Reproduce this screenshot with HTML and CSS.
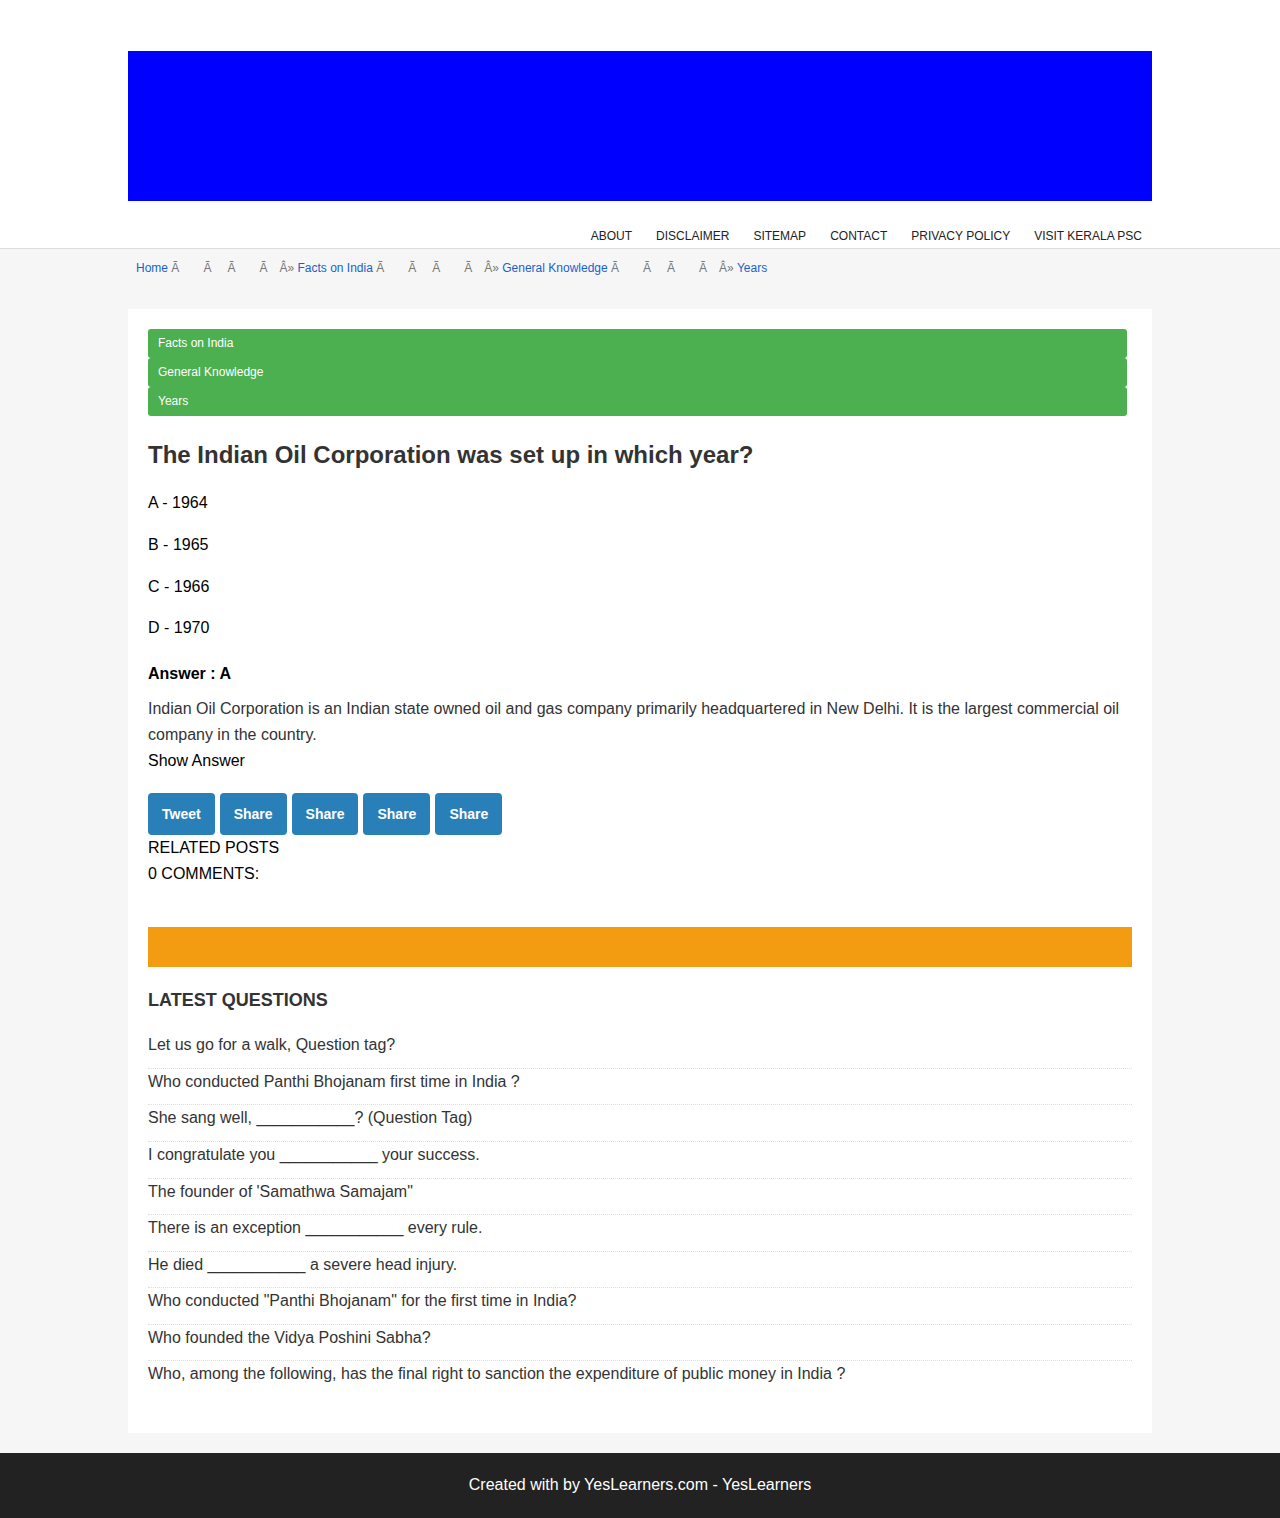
FILE: index.html
```html
<!DOCTYPE html>
<html>
<head>
<meta charset="utf-8">
<title>The Indian Oil Corporation was set up in which year?</title>
<link rel="stylesheet" href="styles.css">
</head>
<body>
<header class="header">
  <div class="banner"></div>
  <nav class="nav">
    <a href="#">ABOUT</a>
    <a href="#">DISCLAIMER</a>
    <a href="#">SITEMAP</a>
    <a href="#">CONTACT</a>
    <a href="#">PRIVACY POLICY</a>
    <a href="#">VISIT KERALA PSC</a>
  </nav>
</header>
<div class="crumbs">
  <a href="#">Home</a> <span class="moj">Ã<span class="g24"></span>Ã<span class="g16"></span>Ã<span class="g24"></span>Ã<span class="g12"></span>Â»</span> <a href="#">Facts on India</a> <span class="moj">Ã<span class="g24"></span>Ã<span class="g16"></span>Ã<span class="g24"></span>Ã<span class="g12"></span>Â»</span> <a href="#">General Knowledge</a> <span class="moj">Ã<span class="g24"></span>Ã<span class="g16"></span>Ã<span class="g24"></span>Ã<span class="g12"></span>Â»</span> <a href="#">Years</a>
</div>
<main class="card">
  <div class="tags">
    <a class="tag" href="#">Facts on India</a>
    <a class="tag" href="#">General Knowledge</a>
    <a class="tag" href="#">Years</a>
  </div>
  <h1 class="title">The Indian Oil Corporation was set up in which year?</h1>
  <p class="opt">A - 1964</p>
  <p class="opt">B - 1965</p>
  <p class="opt">C - 1966</p>
  <p class="opt">D - 1970</p>
  <div class="answer">Answer : A</div>
  <p class="desc">Indian Oil Corporation is an Indian state owned oil and gas company primarily headquartered in New Delhi. It is the largest commercial oil company in the country.</p>
  <div class="show">Show Answer</div>
  <div class="shares">
    <a class="btn" href="#">Tweet</a>
    <a class="btn" href="#">Share</a>
    <a class="btn" href="#">Share</a>
    <a class="btn" href="#">Share</a>
    <a class="btn" href="#">Share</a>
  </div>
  <div class="plain">RELATED POSTS</div>
  <div class="plain">0 COMMENTS:</div>
  <div class="orange"></div>
  <h3 class="latest">LATEST QUESTIONS</h3>
  <ul class="qlist">
    <li>Let us go for a walk, Question tag?</li>
    <li>Who conducted Panthi Bhojanam first time in India ?</li>
    <li>She sang well, ___________? (Question Tag)</li>
    <li>I congratulate you ___________ your success.</li>
    <li>The founder of 'Samathwa Samajam"</li>
    <li>There is an exception ___________ every rule.</li>
    <li>He died ___________ a severe head injury.</li>
    <li>Who conducted "Panthi Bhojanam" for the first time in India?</li>
    <li>Who founded the Vidya Poshini Sabha?</li>
    <li>Who, among the following, has the final right to sanction the expenditure of public money in India ?</li>
  </ul>
</main>
<footer class="footer">Created with by YesLearners.com - YesLearners</footer>
</body>
</html>
```
FILE: styles.css
```css
* { box-sizing: border-box; }
body {
  margin: 0;
  background: #f6f6f6;
  font-family: "Liberation Sans", Arial, sans-serif;
  line-height: 1.6;
  color: #000;
}
a { text-decoration: none; }

.header {
  background: #fff;
  padding-top: 51px;
  border-bottom: 1px solid #ddd;
}
.banner {
  width: 1024px;
  height: 150px;
  margin: 0 auto;
  background: #0000ff;
}
.nav {
  width: 1024px;
  margin: 0 auto;
  padding-top: 23px;
  display: flex;
  justify-content: flex-end;
  font-size: 12px;
  line-height: 24px;
}
.nav a {
  color: #222;
  padding: 0 12px;
}
.nav a:last-child { padding-right: 10px; }

.crumbs {
  width: 1024px;
  margin: 0 auto;
  padding: 9px 8px 7px;
  font-size: 12px;
  line-height: 20px;
  color: #777;
}
.crumbs a { color: #1a5fd0; }
.moj { color: #777; }
.g24 { display: inline-block; width: 24px; }
.g16 { display: inline-block; width: 16px; }
.g12 { display: inline-block; width: 12px; }

.card {
  width: 1024px;
  margin: 24px auto 20px;
  background: #fff;
  padding: 20px 20px 20px;
}
.tags { display: flex; flex-direction: column; }
.tag {
  display: block;
  height: 29px;
  line-height: 28px;
  margin-right: 5px;
  padding-left: 10px;
  background: #4caf50;
  color: #fff;
  font-size: 12px;
  border-radius: 3px;
}
.title {
  margin: 20px 0 16px;
  font-size: 24px;
  font-weight: bold;
  color: #333;
}
.opt {
  margin: 16px 0;
  font-size: 16px;
}
.answer {
  margin: 20px 0 10px;
  font-size: 16px;
  font-weight: bold;
}
.desc {
  margin: 0;
  font-size: 16px;
  color: #333;
}
.show { font-size: 16px; }
.shares {
  display: flex;
  gap: 5px;
  margin-top: 20px;
}
.btn {
  display: block;
  height: 42px;
  line-height: 42px;
  padding: 0 14px;
  background: #2980b9;
  color: #fff;
  font-size: 14px;
  font-weight: bold;
  border-radius: 4px;
}
.plain { font-size: 16px; }
.orange {
  margin-top: 41px;
  height: 40px;
  background: #f39c12;
}
.latest {
  margin: 19px 0 17px;
  font-size: 18px;
  font-weight: bold;
  color: #333;
}
.qlist {
  list-style: none;
  margin: 0 0 16px;
  padding: 0;
}
.qlist li {
  font-size: 16px;
  color: #333;
  padding-bottom: 10px;
  border-bottom: 1px dotted #ddd;
}
.qlist li:last-child { border-bottom: none; }

.footer {
  background: #222;
  color: #fff;
  text-align: center;
  font-size: 16px;
  height: 65px;
  line-height: 64px;
}
```
